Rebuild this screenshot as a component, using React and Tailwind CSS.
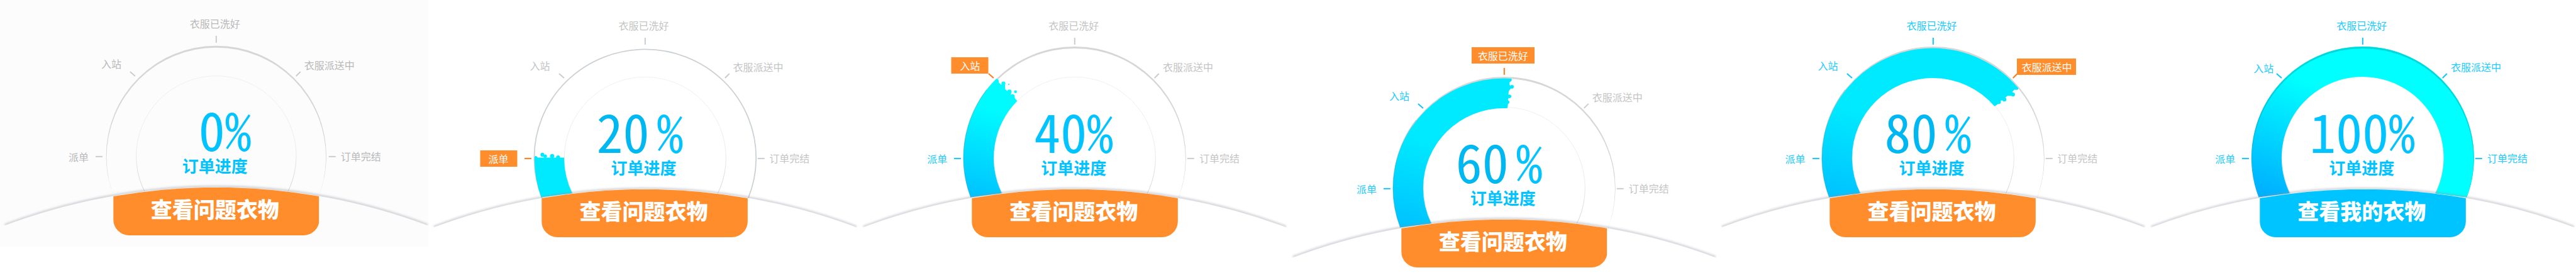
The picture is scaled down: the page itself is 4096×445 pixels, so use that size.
const WIDTH = 683;
const HEIGHT = 445;

const CYAN = "text-[#1ccbff]";
const FLAG = "bg-[#ff8d2c] text-white";

const LABELS = [
  { key: "dispatch", text: "派单", x: -219, y: 1 },
  { key: "arrive", text: "入站", x: -167, y: -147 },
  { key: "washed", text: "衣服已洗好", x: -2, y: -211 },
  { key: "deliver", text: "衣服派送中", x: 180, y: -145 },
  { key: "done", text: "订单完结", x: 230, y: 0 },
];

const TICKS = [
  [-192, 1, -181, 1],
  [-137, -134, -129, -127],
  [0, -191, 0, -180],
  [134, -134, 127, -127],
  [179, 1, 190, 1],
];

const START = "M-116 56.5 L-165.5 62.7";

const STAGES = [
  {
    id: "s0", digits: "0", percentX: 14, cx: 344, cy: 248, scale: 0.99, done: 0, active: -1,
    action: "查看问题衣物", paper: "#fcfcfc",
  },
  {
    id: "s20", digits: "20", spaced: true, percentX: -8, cx: 343, cy: 251, scale: 1, done: 0, active: 0,
    action: "查看问题衣物", outline: true, flagX: -233, flagWidth: "w-[59px]",
    band: `${START} A177 177 0 0 1 -176 -1.5 Q-174 -5 -170.8 -0.4 H-128.9 A129 129 0 0 0 -116 56.5Z`,
    drops: [[-163.5, -5, 3.1], [-159, -2.6, 2.8], [-148, -2.8, 3.4], [-138.5, -0.8, 3.2]],
    from: "#00eaff", to: "#00eaff",
  },
  {
    id: "s40", digits: "40", percentX: -2, cx: 344, cy: 251, scale: 1, done: 1, active: 1,
    action: "查看问题衣物", flagX: -167, flagWidth: "w-[59px]",
    band: `${START} A177 177 0 0 1 -124.8 -125.6 Q-120.5 -126 -120.8 -120 L-117.2 -116.5 L-111 -118 L-110.7 -109.8 L-107.7 -106.4 L-101 -104 L-102 -100 L-95.5 -96 L-95 -94.7 L-91.5 -90.4 A129 129 0 0 0 -116 56.5Z`,
    drops: [[-113.3, -118.3, 3.1], [-104.9, -116.9, 1.1], [-103.9, -105.2, 3.5], [-94.2, -105.2, 2.3], [-99, -97.7, 3.6]],
    from: "#00c2ff", to: "#00fbff",
  },
  {
    id: "s60", digits: "60", spaced: true, percentX: -8, cx: 344, cy: 299, scale: 1, done: 2, active: 2,
    action: "查看问题衣物", flagX: -2, flagWidth: "w-[100px]",
    band: `${START} A177 177 0 0 1 -177 0 A177 174.5 0 0 1 0 -174.5 L11.5 -174 Q13 -170 8.7 -168.5 L8.3 -164.4 L12 -160 L7.3 -154.3 L6.6 -149.3 L8 -146 L6 -141 L6 -133 L4.8 -127 H0 A129 127 0 0 0 -129 0 A129 129 0 0 0 -116 56.5Z`,
    drops: [[12.3, -161, 2.9], [8.3, -145.8, 2.9], [5.2, -136.7, 2.9]],
    from: "#00c2ff", to: "#00eaff",
  },
  {
    id: "s80", digits: "80", spaced: true, percentX: -8, cx: 343, cy: 251, scale: 1, done: 3, active: 3,
    action: "查看问题衣物", flagX: 181, flagWidth: "w-[94px]",
    band: `${START} A177 177 0 0 1 -177 0 A177 174.5 0 0 1 0 -174.5 A177 174.5 0 0 1 135.5 -110.9 Q136 -107 129.4 -108.5 L125.8 -104.9 L128 -101 L124 -98.5 L118.3 -98.8 L115.3 -96.2 L113 -91 L108.2 -91.3 L105 -87 L97.7 -82 A129 127 0 0 0 0 -127 A129 127 0 0 0 -129 0 A129 129 0 0 0 -116 56.5Z`,
    drops: [[127, -100.8, 3.1], [113.3, -92.7, 3.1], [104.6, -88.7, 3.1]],
    from: "#00c2ff", to: "#00eaff",
  },
  {
    id: "s100", digits: "100", percentX: -1, cx: 344, cy: 251, scale: 1, done: 5, active: -1,
    action: "查看我的衣物", blue: true, nudges: { arrive: [9, 4] },
    band: `${START} A177 177 0 1 1 165.5 62.7 L116 56.5 A129 129 0 1 0 -116 56.5Z`,
    cyanHalf: "M0 -177 A177 177 0 0 1 165.5 62.7 L116 56.5 A129 129 0 0 0 0 -129Z",
    from: "#00aeff", to: "#00ffff",
  },
];

const percent = (value, total) => `${(value / total) * 100}%`;
const at = (stage, x, y) => ({
  left: percent(stage.cx + x, WIDTH),
  top: percent(stage.cy + y, HEIGHT),
});

function tickColor(stage, index) {
  if (index === stage.active) return "#ff7a1a";
  return index < stage.done ? "#12c4fb" : "#c9cdd1";
}

function Gauge({ stage }) {
  const { id, cx, cy, scale, paper } = stage;
  return (
    <svg viewBox={`0 0 ${WIDTH} ${HEIGHT}`} className="block w-full" aria-hidden="true">
      <defs>
        <linearGradient id={`${id}-band`} gradientUnits="userSpaceOnUse" x1="-150" y1="65" x2={stage.blue ? -80 : -115} y2={stage.blue ? -118 : -75}>
          <stop offset="0" stopColor={stage.from} />
          <stop offset="1" stopColor={stage.to} />
        </linearGradient>
        <linearGradient id={`${id}-inner`} gradientUnits="userSpaceOnUse" x1="0" y1="-129" x2="0" y2="62">
          <stop offset="0" stopColor="#f0f0f0" />
          <stop offset="0.6" stopColor="#ececec" />
          <stop offset="1" stopColor="#d2d2d2" />
        </linearGradient>
        <clipPath id={`${id}-sky`}>
          <path d="M-343 113 A960 960 0 0 1 343 113 V-300 H-343Z" />
        </clipPath>
        <filter id={`${id}-soft`} x="-10%" y="-60%" width="120%" height="220%">
          <feGaussianBlur stdDeviation="1.4" />
        </filter>
        <filter id={`${id}-edge`}>
          <feGaussianBlur stdDeviation="0.5" />
        </filter>
      </defs>
      {paper && <rect width={WIDTH - 1} height="392" fill={paper} />}
      <g transform={`translate(${cx} ${cy})`}>
        <g clipPath={`url(#${id}-sky)`}>
          <g transform={`scale(${scale})`}>
            <circle r="128.6" fill="none" stroke={`url(#${id}-inner)`} />
            {stage.outline && <ellipse rx="176.5" ry="172.5" fill="none" stroke="#ccd1d5" strokeWidth="1.8" />}
            {!stage.outline && !stage.blue && (
              <path
                d="M-177 0a177 177 0 1 0 354 0a177 177 0 1 0 -354 0Z M-176.2 2.2a176.2 176.2 0 1 0 352.4 0a176.2 176.2 0 1 0 -352.4 0Z"
                fillRule="evenodd" fill="#d6d6d6" filter={`url(#${id}-edge)`}
              />
            )}
            {stage.band && <path d={stage.band} fill={`url(#${id}-band)`} />}
            {stage.cyanHalf && <path d={stage.cyanHalf} fill="#00ffff" />}
            {stage.drops?.map(([x, y, r]) => <circle key={x} cx={x} cy={y} r={r} fill={stage.to} />)}
            {stage.blue && (
              <path
                d="M-177 0a177 177 0 1 0 354 0a177 177 0 1 0 -354 0Z M-176.2 2.4a176.2 176.2 0 1 0 352.4 0a176.2 176.2 0 1 0 -352.4 0Z"
                fillRule="evenodd" fill="#00a0a8" fillOpacity="0.4" filter={`url(#${id}-edge)`}
              />
            )}
            {stage.band && !stage.outline && !stage.blue && (
              <path d="M-165.5 62.7 A177 177 0 0 1 -140 -108.3" fill="none" stroke="#008c9c" strokeOpacity="0.3" strokeWidth="1.2" />
            )}
          </g>
          <path d="M-336 110 A960 960 0 0 1 336 110" fill="none" stroke="#8c909c" strokeWidth="5" strokeOpacity="0.34" filter={`url(#${id}-soft)`} />
        </g>
        {TICKS.map(([x1, y1, x2, y2], index) => (
          <line key={index} x1={x1} y1={y1} x2={x2} y2={y2} stroke={tickColor(stage, index)} strokeWidth="2" />
        ))}
      </g>
    </svg>
  );
}

function StageLabel({ stage, label, index }) {
  const active = index === stage.active;
  const idle = stage.paper ? "text-[#b8b8b8]" : "text-[#c4c4c4]";
  const tone = active
    ? `${FLAG} ${stage.flagWidth} h-[26px]`
    : index < stage.done ? CYAN : idle;
  const [dx, dy] = stage.nudges?.[label.key] ?? [0, 0];
  return (
    <li
      className={`absolute flex -translate-x-1/2 -translate-y-1/2 items-center justify-center text-base leading-none whitespace-nowrap ${tone}`}
      style={at(stage, (active ? stage.flagX : label.x) + dx, label.y + dy)}
    >
      {label.text}
    </li>
  );
}

function Stage({ stage }) {
  return (
    <section className="relative">
      <Gauge stage={stage} />
      <ol>
        {LABELS.map((label, index) => (
          <StageLabel key={label.key} stage={stage} label={label} index={index} />
        ))}
      </ol>
      <p
        className={`absolute flex -translate-x-1/2 -translate-y-1/2 items-baseline font-['Noto_Sans_Mono_CJK_SC','Liberation_Mono',monospace] text-[84px] leading-none whitespace-nowrap text-[#00c3ff] ${stage.spaced ? "gap-3" : ""}`}
        style={at(stage, stage.percentX, -44)}
      >
        <span className={stage.spaced ? "text-[#00b8f1]" : ""}>{stage.digits}</span>
        <span>%</span>
      </p>
      <h2
        className="absolute -translate-x-1/2 -translate-y-1/2 text-[26px] leading-none font-bold whitespace-nowrap text-[#00c3ff]"
        style={at(stage, -2, 15)}
      >
        订单进度
      </h2>
      <button
        type="button"
        className="absolute w-[48%] -translate-x-1/2 cursor-pointer"
        style={at(stage, 0, 50)}
      >
        <svg viewBox="0 0 328 76" className={`block w-full ${stage.blue ? "fill-[#00c4ff]" : "fill-[#ff8d2c]"}`} aria-hidden="true">
          <path d="M0 14 A960 960 0 0 1 328 14 V51 A25 25 0 0 1 303 76 H25 A25 25 0 0 1 0 51Z" />
        </svg>
        <span className="absolute inset-0 flex items-center justify-center pr-1 pb-2 text-[34px] leading-none font-black whitespace-nowrap text-white">
          {stage.action}
        </span>
      </button>
    </section>
  );
}

export default function App() {
  return (
    <main className="grid grid-cols-6 overflow-hidden bg-white font-['Noto_Sans_CJK_SC',sans-serif]">
      {STAGES.map((stage) => (
        <Stage key={stage.id} stage={stage} />
      ))}
    </main>
  );
}
